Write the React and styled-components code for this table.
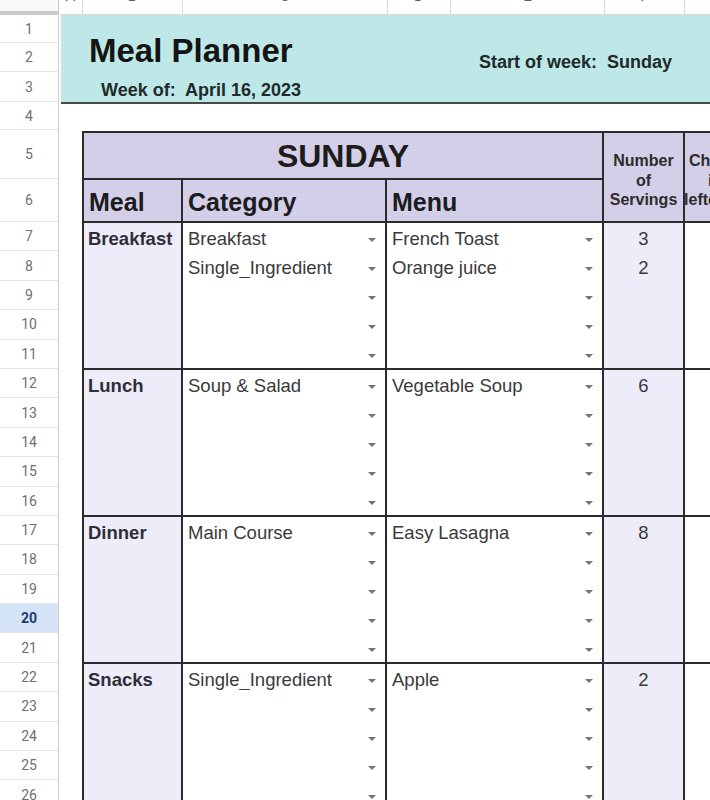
import React from 'react';
import styled, { createGlobalStyle } from 'styled-components';

const GlobalStyle = createGlobalStyle`
  html, body { margin: 0; padding: 0; background: #ffffff; overflow: hidden; }
  body { font-family: "Liberation Sans", Arial, sans-serif; }
  * { box-sizing: border-box; }
`;

const C = {
  teal: '#bde8e7',
  lav: '#d4cfe9',
  lavLight: '#edecf8',
  line: '#2b2b2b',
  grid: '#dcdcdc',
  text: '#3a3a3a',
  head: '#1c1c1c',
};

const Page = styled.div`
  width: 710px;
  height: 800px;
  overflow: hidden;
  display: flex;
  flex-direction: column;
`;

const ColumnBar = styled.div`
  display: flex;
  height: 15px;
  flex: none;
`;

const Corner = styled.div`
  width: 59px;
  flex: none;
  height: 15px;
  border-bottom: 4px solid #c9c9c9;
  border-right: 1px solid #c9c9c9;
  background: #fafafa;
`;

const ColHead = styled.div`
  width: ${(p) => p.$w}px;
  flex: none;
  height: 15px;
  border-right: 1px solid ${C.grid};
  border-bottom: 1px solid ${C.grid};
  overflow: hidden;
  text-align: center;
  font-family: Roboto, "Liberation Sans", sans-serif;
  font-size: 15px;
  line-height: 15px;
  color: #5f5f5f;
`;

const ColLabel = styled.div`
  margin-top: -11px;
`;

const Body = styled.div`
  display: flex;
  flex: 1;
  min-height: 0;
`;

const RowHeaders = styled.div`
  width: 59px;
  flex: none;
  display: flex;
  flex-direction: column;
  border-right: 1px solid #cfcfcf;
`;

const RowNum = styled.div`
  height: ${(p) => p.$h}px;
  flex: none;
  display: flex;
  align-items: center;
  justify-content: center;
  border-bottom: 1px solid #e3e3e3;
  font-family: Roboto, "Liberation Sans", sans-serif;
  font-size: 14px;
  color: ${(p) => (p.$active ? '#1c3d6e' : '#707070')};
  font-weight: ${(p) => (p.$active ? 700 : 400)};
  background: ${(p) => (p.$active ? '#d5e3f7' : '#ffffff')};
`;

const Content = styled.div`
  flex: 1;
  min-width: 0;
  overflow: hidden;
  display: flex;
  flex-direction: column;
`;

const Band = styled.div`
  margin-left: 2px;
  height: 89px;
  flex: none;
  background: ${C.teal};
  border-bottom: 2px solid #4a4a4a;
  display: grid;
  grid-template-columns: 418px 1fr;
`;

const BandLeft = styled.div`
  padding: 16px 0 0 28px;
  display: flex;
  flex-direction: column;
`;

const Title = styled.div`
  font-size: 33px;
  line-height: 40px;
  font-weight: 700;
  color: #141414;
`;

const Week = styled.div`
  margin-top: 8px;
  padding-left: 12px;
  font-size: 18px;
  line-height: 22px;
  font-weight: 700;
  color: #1f2a2a;
  white-space: pre;
`;

const StartWeek = styled.div`
  padding-top: 36px;
  font-size: 18px;
  line-height: 22px;
  font-weight: 700;
  color: #1f2a2a;
  white-space: pre;
`;

const Table = styled.div`
  margin: 27px 0 0 23px;
  width: 659px;
  display: grid;
  grid-template-columns: 99px 204px 217px 81px 58px;
  grid-template-rows: 47px 43px repeat(4, 147px);
  border-left: 2px solid ${C.line};
  border-top: 2px solid ${C.line};
  flex: none;
`;

const Cell = styled.div`
  border-right: 2px solid ${C.line};
  border-bottom: 2px solid ${C.line};
  background: ${(p) => p.$bg || '#ffffff'};
  grid-column: ${(p) => p.$col || 'auto'};
  grid-row: ${(p) => p.$row || 'auto'};
  min-width: 0;
  overflow: hidden;
`;

const DayTitle = styled(Cell)`
  display: flex;
  align-items: center;
  justify-content: center;
  font-size: 32px;
  line-height: 1;
  font-weight: 700;
  color: ${C.head};
`;

const ColTitle = styled(Cell)`
  padding: 8px 0 0 5px;
  font-size: 25px;
  line-height: 29px;
  font-weight: 700;
  color: ${C.head};
`;

const SmallHead = styled(Cell)`
  display: flex;
  flex-direction: column;
  justify-content: center;
  align-items: center;
  padding-top: 7px;
  text-align: center;
  font-size: 16px;
  line-height: 19.5px;
  font-weight: 700;
  color: #2c2c2c;
`;

const MealLabel = styled(Cell)`
  padding: 5px 0 0 4px;
  font-size: 18.5px;
  line-height: 21px;
  font-weight: 700;
  color: #2e2e38;
`;

const Stack = styled(Cell)`
  display: flex;
  flex-direction: column;
`;

const Line = styled.div`
  height: 29px;
  flex: none;
  display: flex;
  align-items: flex-start;
  justify-content: ${(p) => (p.$center ? 'center' : 'flex-start')};
  padding: 5px ${(p) => (p.$center ? 0 : 9)}px 0 ${(p) => (p.$center ? 0 : 5)}px;
`;

const LineText = styled.span`
  flex: ${(p) => (p.$center ? 'none' : 1)};
  font-size: 18.5px;
  line-height: 21px;
  color: ${C.text};
  white-space: nowrap;
  overflow: hidden;
`;

const Arrow = styled.span`
  flex: none;
  width: 0;
  height: 0;
  margin-top: 10px;
  border-left: 4px solid transparent;
  border-right: 4px solid transparent;
  border-top: 4px solid #747474;
`;

const columns = [
  { w: 24, l: 'A' },
  { w: 100, l: 'B' },
  { w: 205, l: 'C' },
  { w: 63, l: 'D' },
  { w: 154, l: 'E' },
  { w: 80, l: 'F' },
  { w: 100, l: 'G' },
];

const rowHeights = [28, 29, 30, 28, 49, 43];
const rows = [];
rowHeights.forEach((h, i) => rows.push({ n: i + 1, h }));
for (let i = 7; i <= 27; i++) rows.push({ n: i, h: 29.4 });

const sections = [
  {
    meal: 'Breakfast',
    cat: ['Breakfast', 'Single_Ingredient'],
    menu: ['French Toast', 'Orange juice'],
    serv: ['3', '2'],
  },
  { meal: 'Lunch', cat: ['Soup & Salad'], menu: ['Vegetable Soup'], serv: ['6'] },
  { meal: 'Dinner', cat: ['Main Course'], menu: ['Easy Lasagna'], serv: ['8'] },
  { meal: 'Snacks', cat: ['Single_Ingredient'], menu: ['Apple'], serv: ['2'] },
];

const five = [0, 1, 2, 3, 4];

function DropColumn({ items, row, col }) {
  return (
    <Stack $row={row} $col={col}>
      {five.map((i) => (
        <Line key={i}>
          <LineText>{items[i] || ''}</LineText>
          <Arrow />
        </Line>
      ))}
    </Stack>
  );
}

export default function App() {
  return (
    <Page>
      <GlobalStyle />
      <ColumnBar>
        <Corner />
        {columns.map((c) => (
          <ColHead key={c.l} $w={c.w}>
            <ColLabel>{c.l}</ColLabel>
          </ColHead>
        ))}
      </ColumnBar>
      <Body>
        <RowHeaders>
          {rows.map((r) => (
            <RowNum key={r.n} $h={r.h} $active={r.n === 20}>
              {r.n}
            </RowNum>
          ))}
        </RowHeaders>
        <Content>
          <Band>
            <BandLeft>
              <Title>Meal Planner</Title>
              <Week>{'Week of:  April 16, 2023'}</Week>
            </BandLeft>
            <StartWeek>{'Start of week:  Sunday'}</StartWeek>
          </Band>
          <Table>
            <DayTitle $col="1 / 4" $row="1" $bg={C.lav}>SUNDAY</DayTitle>
            <SmallHead $col="4" $row="1 / 3" $bg={C.lav}>
              <span>Number</span>
              <span>of</span>
              <span>Servings</span>
            </SmallHead>
            <SmallHead $col="5" $row="1 / 3" $bg={C.lav}>
              <span>Check</span>
              <span>if</span>
              <span>leftover</span>
            </SmallHead>
            <ColTitle $col="1" $row="2" $bg={C.lav}>Meal</ColTitle>
            <ColTitle $col="2" $row="2" $bg={C.lav}>Category</ColTitle>
            <ColTitle $col="3" $row="2" $bg={C.lav}>Menu</ColTitle>
            {sections.map((s, i) => {
              const row = String(i + 3);
              return (
                <React.Fragment key={s.meal}>
                  <MealLabel $col="1" $row={row} $bg={C.lavLight}>{s.meal}</MealLabel>
                  <DropColumn items={s.cat} row={row} col="2" />
                  <DropColumn items={s.menu} row={row} col="3" />
                  <Stack $col="4" $row={row} $bg={C.lavLight}>
                    {five.map((k) => (
                      <Line key={k} $center>
                        <LineText $center>{s.serv[k] || ''}</LineText>
                      </Line>
                    ))}
                  </Stack>
                  <Cell $col="5" $row={row} />
                </React.Fragment>
              );
            })}
          </Table>
        </Content>
      </Body>
    </Page>
  );
}
